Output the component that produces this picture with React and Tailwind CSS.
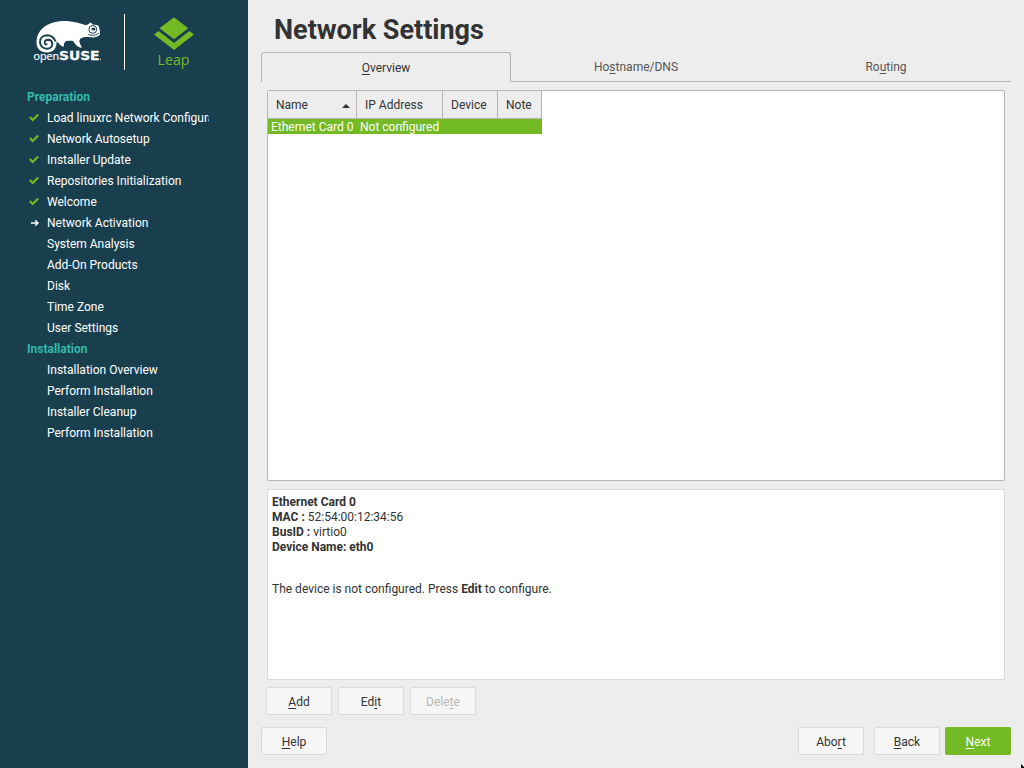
import React from "react";

const preparation = [
  ["Load linuxrc Network Configuration", "done"],
  ["Network Autosetup", "done"],
  ["Installer Update", "done"],
  ["Repositories Initialization", "done"],
  ["Welcome", "done"],
  ["Network Activation", "current"],
  ["System Analysis", "todo"],
  ["Add-On Products", "todo"],
  ["Disk", "todo"],
  ["Time Zone", "todo"],
  ["User Settings", "todo"],
];

const installation = [
  ["Installation Overview", "todo"],
  ["Perform Installation", "todo"],
  ["Installer Cleanup", "todo"],
  ["Perform Installation", "todo"],
];

function Key({ children }) {
  return (
    <span className="underline decoration-1 underline-offset-2 [text-decoration-skip-ink:none]">
      {children}
    </span>
  );
}

function Logo() {
  return (
    <svg className="block h-[87px] w-[248px]" viewBox="0 0 248 87">
      <path
        fill="#fff"
        d="M47 52.5C40.500 52.500 36.500 48.500 36.500 42.500C36.500 35 40.500 28.500 47 25C53 21.700 60 20.500 67 21C75 21.500 81 23.500 86 25.300C87.500 24.600 89.500 24 90 22.600C91.500 22.800 92 23.700 92.500 24.500C95.500 24.600 98.300 25 98.800 26.500C99.600 29 100.500 32.500 99.800 34.800C98 37.200 94 37.700 90.500 37.300C86.500 36.800 82.500 36.600 80.200 39C78.500 41 80 44 82 47.700C79.500 47.600 77.500 46.700 76 45L73 41C71.500 40.800 69 40.600 66.500 41C64.500 41.800 63.500 44 63.800 46.700C61.500 46.500 60 45 59 43.500L56.500 41.500C57 48.500 53 52.500 47 52.500Z"
      />
      <path
        d="M55.500 41.500C54 37 50.500 35.200 46.800 35.200C42.800 35.400 40 38.200 40 42C40 46 43.200 48.800 47 48.800C50.400 48.800 52.400 46.700 52.300 43.900C52.200 41.200 50.300 39.700 47.900 39.700C45.800 39.800 44.600 41.100 44.700 42.700C44.800 44 46 44.700 47.400 44.300"
        fill="none"
        stroke="#193f4f"
        strokeWidth="1.900"
      />
      <circle cx="92.800" cy="29.400" r="3.900" fill="none" stroke="#193f4f" strokeWidth="1" />
      <ellipse cx="93.400" cy="29" rx="2" ry="1.500" fill="#193f4f" />
      <path d="M88 34.500C92 36 96.500 35.300 99.300 32.800" fill="none" stroke="#193f4f" strokeWidth="0.900" />
      <text x="33.500" y="60" fill="#fff" stroke="#fff" strokeWidth="0.200" fontFamily="Open Sans, sans-serif" fontSize="10.500" textLength="25.500" lengthAdjust="spacingAndGlyphs">
        open
      </text>
      <text x="59" y="60" fill="#fff" stroke="#fff" strokeWidth="0.300" fontFamily="DejaVu Sans, sans-serif" fontSize="12.500" fontWeight="700" textLength="40.500" lengthAdjust="spacingAndGlyphs">
        SUSE
      </text>
      <circle cx="100.500" cy="59.300" r="0.600" fill="#fff" />
      <rect x="124" y="14" width="1" height="56" fill="#fff" />
      <path fill="#73ba25" d="M174 17.300L188.200 28.200L174 39.200L159.500 28.200Z" />
      <path fill="#73ba25" d="M154 34.500L158.500 31L174 43L189.400 31L193.900 34.500L174 50.100Z" />
      <text x="157.500" y="65" fill="#73ba25" fontFamily="Open Sans, sans-serif" fontSize="14.500" textLength="32" lengthAdjust="spacingAndGlyphs">
        Leap
      </text>
    </svg>
  );
}

function Step({ label, state }) {
  return (
    <li className="flex h-[21px] items-center pb-px">
      <span className="flex w-5 shrink-0">
        {state === "done" && (
          <svg className="ml-px h-3 w-3" viewBox="0 0 12 12">
            <path d="M1.800 5.100L4.700 8.100L10.200 2.500" fill="none" stroke="#73ba25" strokeWidth="2.100" />
          </svg>
        )}
        {state === "current" && (
          <svg className="ml-px h-3 w-3" viewBox="0 0 12 12">
            <path d="M3 6H10M7.200 3.300L9.900 6L7.200 8.700" fill="none" stroke="#fff" strokeWidth="1.400" />
          </svg>
        )}
      </span>
      <span className="w-[162px] overflow-hidden whitespace-nowrap leading-4">{label}</span>
    </li>
  );
}

function Steps({ title, items }) {
  return (
    <section>
      <h2 className="h-[21px] font-bold leading-[21px] text-[#35b9ab]">{title}</h2>
      <ul>
        {items.map(([label, state], i) => (
          <Step key={i} label={label} state={state} />
        ))}
      </ul>
    </section>
  );
}

function Button({ children, disabled }) {
  return (
    <button
      disabled={disabled}
      className="h-7 w-[66px] rounded-[2px] border border-[#dadada] bg-[#f6f6f6] pt-0.5 text-[#333] disabled:text-[#b8b8b8]"
    >
      {children}
    </button>
  );
}

export default function App() {
  return (
    <div className="relative flex h-[768px] w-[1024px] overflow-hidden bg-[#ededed] font-['Roboto',sans-serif] text-xs text-[#333]">
      <aside className="w-[248px] shrink-0 bg-[#193f4f] text-white">
        <Logo />
        <nav className="pl-[27px]">
          <Steps title="Preparation" items={preparation} />
          <Steps title="Installation" items={installation} />
        </nav>
      </aside>

      <main className="flex flex-1 flex-col pl-[13px] pr-[13px]">
        <h1 className="h-[52px] pl-[13px] pt-3 text-[27px] font-bold leading-9">Network Settings</h1>

        <div className="flex h-[30px] text-center">
          <div className="w-[250px] rounded-t-[3px] border border-b-0 border-[#b5b5b5] pt-[7px]">
            <Key>O</Key>verview
          </div>
          <div className="w-[250px] border-b border-[#b5b5b5] pt-[7px] text-[#555]">
            Ho<Key>s</Key>tname/DNS
          </div>
          <div className="w-[250px] border-b border-[#b5b5b5] pt-[7px] text-[#555]">
            Ro<Key>u</Key>ting
          </div>
        </div>

        <div className="ml-[6px] mt-2 h-[391px] w-[738px] rounded-[2px] border border-[#b5b5b5] bg-white">
          <div className="flex h-[28px] w-[274px] border-b border-[#b5b5b5] bg-[#ededed] leading-[29px]">
            <div className="flex w-[89px] justify-between border-r border-[#b5b5b5] pl-2 pr-1.5">
              Name
              <svg className="mt-[13px] h-1 w-2" viewBox="0 0 8 4">
                <path d="M0 4L4 0L8 4Z" fill="#333" />
              </svg>
            </div>
            <div className="w-[86px] border-r border-[#b5b5b5] pl-2">IP Address</div>
            <div className="w-[55px] border-r border-[#b5b5b5] pl-2">Device</div>
            <div className="w-11 border-r border-[#b5b5b5] pl-2">Note</div>
          </div>
          <div className="flex h-[15px] w-[274px] bg-[#73ba25] leading-[17px] text-white">
            <div className="w-[89px] pl-[3px]">Ethernet Card 0</div>
            <div className="pl-[3px]">Not configured</div>
          </div>
        </div>

        <div className="ml-[6px] mt-2 h-[191px] w-[738px] rounded-[2px] border border-[#dadada] bg-white pl-1 pt-[5px] leading-[15px]">
          <p className="font-bold">Ethernet Card 0</p>
          <p>
            <b>MAC : </b>52:54:00:12:34:56
          </p>
          <p>
            <b>BusID : </b>virtio0
          </p>
          <p className="font-bold">Device Name: eth0</p>
          <p className="mt-[27px]">
            The device is not configured. Press <b>Edit</b> to configure.
          </p>
        </div>

        <div className="ml-[5px] mt-[7px] flex gap-1.5">
          <Button>
            <Key>A</Key>dd
          </Button>
          <Button>
            Ed<Key>i</Key>t
          </Button>
          <Button disabled>
            Dele<Key>t</Key>e
          </Button>
        </div>

        <div className="mt-3 flex">
          <Button>
            <Key>H</Key>elp
          </Button>
          <div className="ml-auto flex">
            <Button>
              Abo<Key>r</Key>t
            </Button>
            <div className="ml-2.5 mr-[5px]">
              <Button>
                <Key>B</Key>ack
              </Button>
            </div>
            <button className="h-7 w-[66px] rounded-[2px] bg-[#73ba25] pt-0.5 text-white">
              <Key>N</Key>ext
            </button>
          </div>
        </div>
      </main>
      <svg className="absolute bottom-0 right-0 h-1 w-1" viewBox="0 0 4 4">
        <path d="M1 0L4 3V4H1Z" fill="#000" />
      </svg>
    </div>
  );
}
